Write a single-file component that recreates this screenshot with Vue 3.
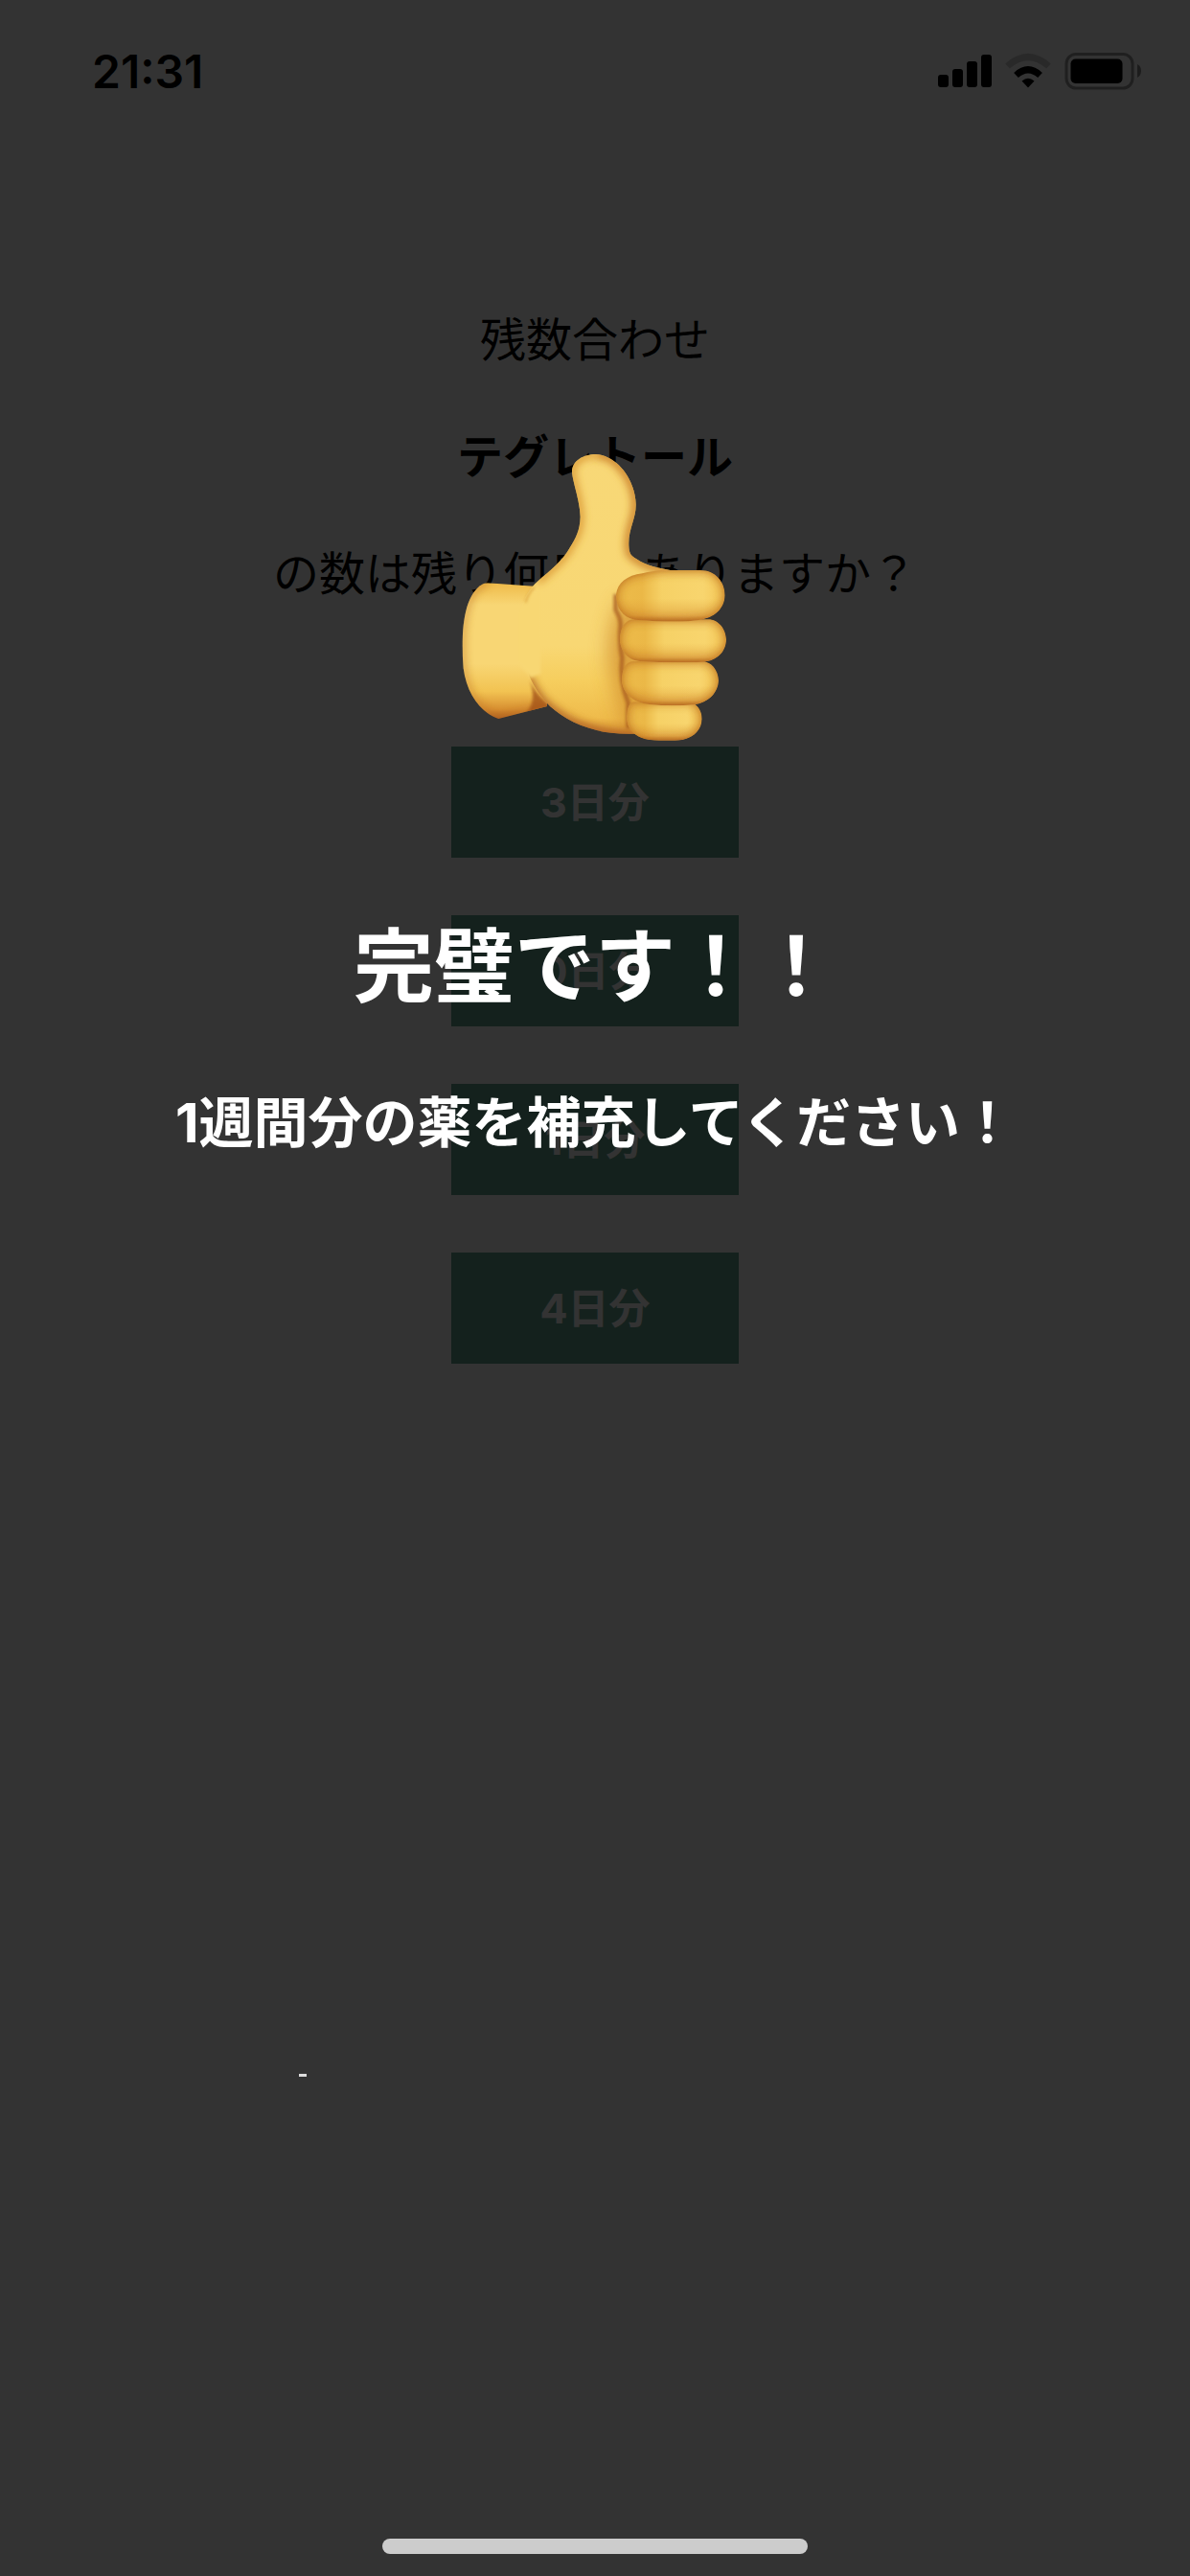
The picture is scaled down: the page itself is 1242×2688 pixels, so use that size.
<script setup>
const choices = ['3日分', '0日分', '1日分', '4日分']

// Finger outlines, little finger first so that each one lies over the next below it
const fingers = [
  'M604 787H770C798 787 815 815 815 841C814 880 780 908 730 908H680C620 908 583 885 579 842C578 805 588 787 604 787Z',
  'M600 660H815C845 660 866 689 867 720C866 758 836 790 790 796Q720 802 650 795C598 790 564 758 563 718C565 680 578 662 600 660Z',
  'M600 529H830C866 526 890 559 891 592C891 630 862 659 820 662Q720 666 620 660C578 655 557 622 557 588C561 550 577 531 600 529Z',
  'M628 385Q660 376 710 375H810C860 375 887 414 887 454C885 499 851 524 810 530Q745 541 605 530C562 522 545 487 546 451C550 415 580 391 628 385Z'
]
</script>

<template>
  <div class="screen">
    <header class="status">
      <span class="time">21:31</span>
      <svg class="status-icons" width="214" height="40" viewBox="978 54 214 40" aria-hidden="true">
        <rect x="979" y="78" width="11" height="13" rx="3" />
        <rect x="994" y="72" width="11" height="19" rx="3" />
        <rect x="1009" y="64" width="11" height="27" rx="3" />
        <rect x="1024" y="57" width="11" height="34" rx="3" />
        <path d="M1073 91.500L1066.500 84.500Q1073 79 1079.500 84.500Z" />
        <path d="M1060.500 78.500Q1073 67 1085.500 78.500" fill="none" stroke="#000" stroke-width="7" />
        <path d="M1051.500 69Q1073 50 1094.500 69" fill="none" stroke="#000" stroke-opacity=".2" stroke-width="7" />
        <rect x="1113" y="56.500" width="69" height="35.500" rx="10" fill="none" stroke="#000" stroke-opacity=".4" stroke-width="3" />
        <rect x="1117.500" y="61.500" width="54" height="25.500" rx="5" />
        <path d="M1187 67Q1191 69 1191 74T1187 81Z" fill-opacity=".45" />
      </svg>
    </header>

    <main class="question">
      <p class="line">残数合わせ</p>
      <p class="line drug">テグレトール</p>
      <p class="line">の数は残り何日分ありますか？</p>
      <div class="choices">
        <button v-for="choice in choices" :key="choice" type="button" class="choice">{{ choice }}</button>
      </div>
    </main>

    <section class="overlay" role="dialog" aria-labelledby="result">
      <svg class="thumb" viewBox="0 0 960 960" role="img" aria-label="thumbs up">
        <defs>
          <linearGradient id="skin" x1="0" y1="0" x2="0" y2="1">
            <stop offset="0" stop-color="#f8d877" />
            <stop offset=".68" stop-color="#f8d773" />
            <stop offset=".8" stop-color="#f6ce5e" />
            <stop offset=".93" stop-color="#efbb4b" />
            <stop offset="1" stop-color="#d38b30" />
          </linearGradient>
          <linearGradient id="cuff" x1="0" y1="0" x2="0" y2="1">
            <stop offset="0" stop-color="#eeb846" />
            <stop offset=".17" stop-color="#f8d674" />
            <stop offset=".6" stop-color="#f8d674" />
            <stop offset=".8" stop-color="#f2c352" />
            <stop offset=".93" stop-color="#d89032" />
            <stop offset="1" stop-color="#aa5c1d" />
          </linearGradient>
          <linearGradient id="finger" x1="0" y1="0" x2="1" y2="0">
            <stop offset="0" stop-color="#edbb4a" />
            <stop offset=".24" stop-color="#ebb847" />
            <stop offset=".42" stop-color="#f6d166" />
            <stop offset=".8" stop-color="#f8d56e" />
            <stop offset="1" stop-color="#f3c555" />
          </linearGradient>
          <linearGradient id="under" x1="0" y1="0" x2="0" y2="1">
            <stop offset=".55" stop-color="#dc9a34" stop-opacity="0" />
            <stop offset=".88" stop-color="#d48a2c" stop-opacity=".45" />
            <stop offset="1" stop-color="#a5521a" stop-opacity=".8" />
          </linearGradient>
          <filter id="soft" x="-30%" y="-30%" width="160%" height="160%"><feGaussianBlur stdDeviation="13" /></filter>
          <filter id="wide" x="-60%" y="-30%" width="220%" height="160%"><feGaussianBlur stdDeviation="28" /></filter>
          <filter id="fine" x="-30%" y="-30%" width="160%" height="160%"><feGaussianBlur stdDeviation="5" /></filter>
          <clipPath id="hand-clip"><path d="M408 70C406 32 445 12 482 12C552 16 606 94 608 168C609 215 583 246 586 300C587 322 592 330 610 340C640 362 680 368 720 376L720 887L608 887C480 893 395 850 340 802C285 748 262 690 248 610L248 500C258 455 278 430 300 410C340 375 380 345 402 303C420 275 433 250 434 208C433 160 413 110 408 70Z" /></clipPath>
          <clipPath id="cuff-clip"><path d="M144 415L330 428V801L178 840C120 821 78 760 68 682C62 611 64 545 78 494C90 452 116 415 144 415Z" /></clipPath>
          <clipPath v-for="(finger, i) in fingers" :id="'finger-' + i" :key="i"><path :d="finger" /></clipPath>
        </defs>
        <g clip-path="url(#cuff-clip)">
          <rect x="50" y="410" width="300" height="430" fill="url(#cuff)" />
          <path d="M144 415C116 415 90 452 78 494C64 545 62 611 68 682C78 760 120 821 178 840L330 801" fill="none" stroke="#bb6d24" stroke-width="14" opacity=".7" filter="url(#soft)" />
          <path d="M276 720C288 745 306 775 345 804L260 826Q300 790 276 720Z" fill="#9f4d18" opacity=".75" filter="url(#fine)" />
        </g>
        <g clip-path="url(#hand-clip)">
          <rect x="180" width="560" height="900" fill="url(#skin)" />
          <path d="M482 12C552 16 606 94 608 168C609 215 583 246 586 300C587 322 592 330 610 340C640 362 680 368 720 376" fill="none" stroke="#c97d26" stroke-width="24" filter="url(#soft)" />
          <path d="M482 12C445 12 406 32 408 70C413 110 433 160 434 208C433 250 420 275 402 303C380 345 340 375 300 410" fill="none" stroke="#d8932d" stroke-width="20" filter="url(#soft)" />
          <path d="M560 470Q500 590 530 710T580 880L640 890V460Z" fill="#d3902f" opacity=".75" filter="url(#wide)" />
          <path d="M545 450V500Q560 525 560 545Q555 600 565 650Q556 720 584 790V870" fill="none" stroke="#a75a1d" stroke-width="14" opacity=".75" filter="url(#fine)" />
          <path d="M270 710C290 765 320 795 350 815Q450 893 610 894" fill="none" stroke="#a4511a" stroke-width="26" opacity=".85" filter="url(#soft)" />
        </g>
        <path d="M242 500V670C252 680 262 692 278 710L310 700V440L262 478Z" fill="#f8d773" filter="url(#fine)" />
        <path d="M290 428Q270 448 262 476" fill="none" stroke="#d99b35" stroke-width="6" opacity=".8" filter="url(#fine)" />
        <g v-for="(finger, i) in fingers" :key="finger" :clip-path="`url(#finger-${i})`">
          <path :d="finger" fill="url(#finger)" />
          <path :d="finger" fill="url(#under)" />
          <path :d="finger" fill="none" stroke="#c57a27" stroke-width="18" opacity=".85" filter="url(#soft)" />
          <path :d="finger" fill="none" stroke="#b3681f" stroke-width="5" opacity=".6" filter="url(#fine)" />
        </g>
      </svg>
      <h1 id="result" class="result">完璧です！！</h1>
      <p class="advice">1週間分の薬を補充してください！</p>
    </section>
    <i class="confetti"></i>
    <div class="home-bar"></div>
  </div>
</template>

<style>
body {
  margin: 0;
  background: #fff;
}
</style>

<style scoped>
.screen {
  position: relative;
  min-height: 100vh;
  background: #fff;
  color: #000;
  font-family: Inter, "Noto Sans CJK JP", sans-serif;
}

.status {
  display: flex;
  align-items: center;
  justify-content: space-between;
  box-sizing: border-box;
  height: 148px;
  padding: 0 50px 0 96px;
}

.time {
  font-size: 48px;
  font-weight: 600;
}

.question {
  display: flex;
  flex-direction: column;
  align-items: center;
  padding-top: 177px;
}

.line {
  margin: 0 0 62px;
  font-size: 48px;
  font-weight: 400;
  line-height: 60px;
  text-align: center;
}

.drug {
  font-weight: 700;
}

.choices {
  display: flex;
  flex-direction: column;
  gap: 60px;
  padding-top: 88px;
}

.choice {
  width: 300px;
  height: 116px;
  padding: 0 0 6px;
  border: 0;
  background: #64a58f;
  color: #fff;
  font-family: inherit;
  font-size: 43px;
  font-weight: 700;
}

.overlay {
  position: absolute;
  inset: 0;
  display: flex;
  flex-direction: column;
  align-items: center;
  padding-top: 470px;
  background: rgba(0, 0, 0, 0.8);
  color: #fff;
}

.thumb {
  width: 320px;
  height: 320px;
}

.result {
  margin: 159px 0 0;
  font-size: 84px;
  font-weight: 700;
  line-height: 120px;
}

.advice {
  margin: 63px 0 0;
  font-size: 57px;
  font-weight: 700;
  line-height: 80px;
}

.confetti {
  position: absolute;
  top: 2164px;
  left: 312px;
  width: 8px;
  height: 3px;
  background: #ddd;
}

.home-bar {
  position: absolute;
  bottom: 23px;
  left: 50%;
  width: 444px;
  height: 16px;
  border-radius: 8px;
  background: #ccc;
  transform: translateX(-50%);
}
</style>
